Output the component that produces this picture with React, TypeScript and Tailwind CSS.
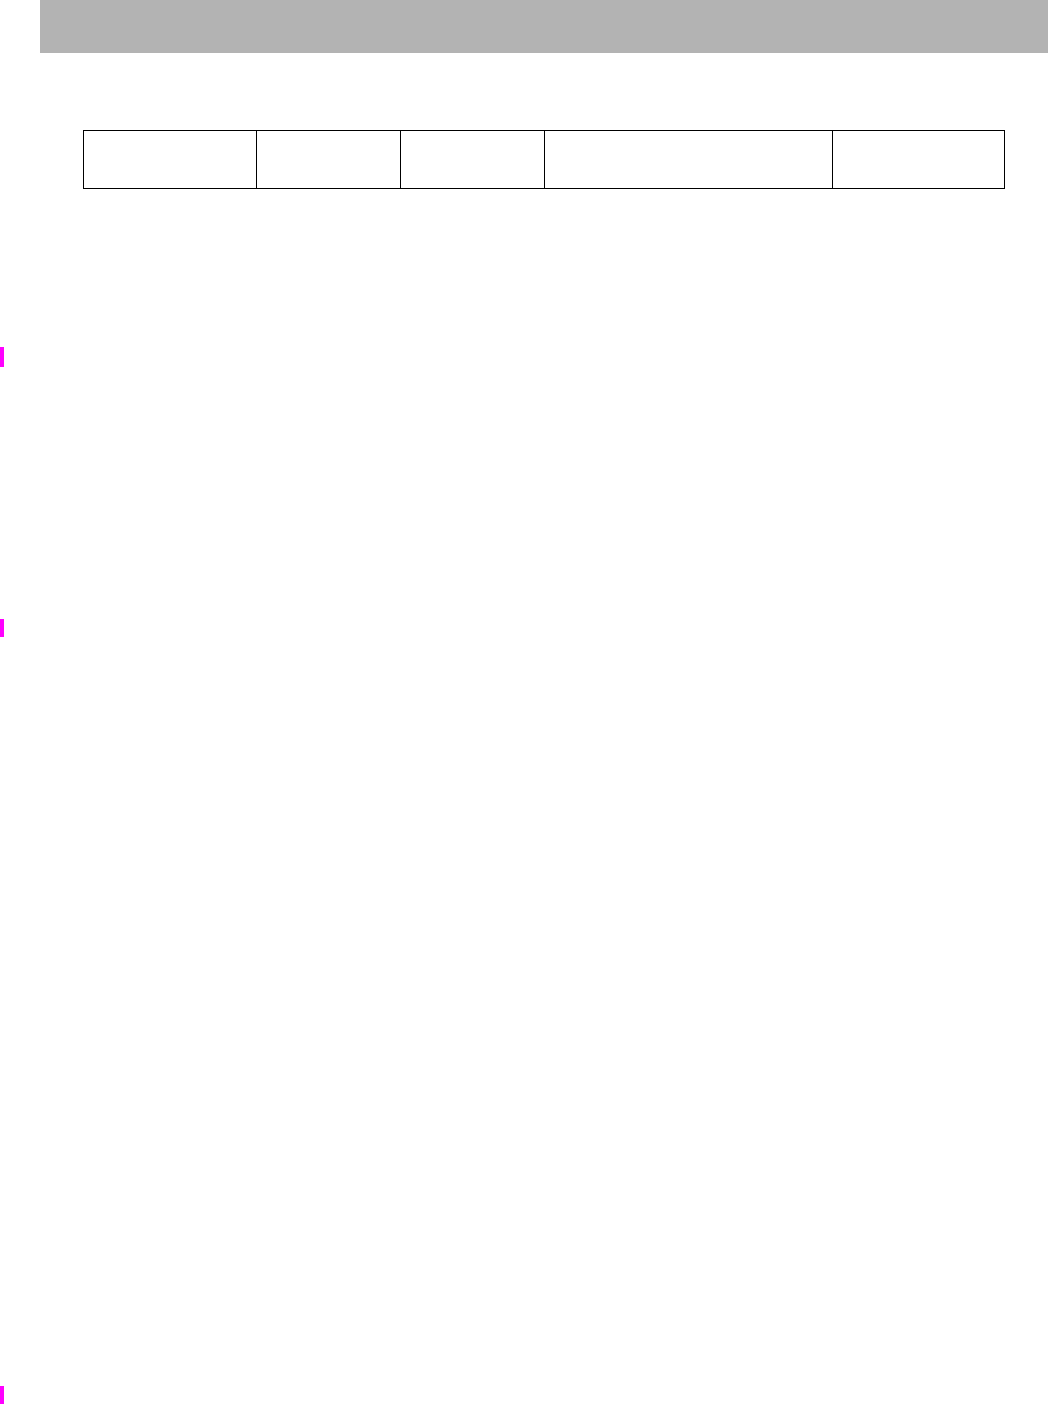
const cells = ["w-[173px]", "w-[144px]", "w-[144px]", "w-[288px]"];

const App = () => {
  return (
    <div className="relative min-h-[1404px] bg-white font-['Liberation_Sans',Arial,sans-serif]">
      <div className="ml-[40px] h-[53px] bg-[#b3b3b3]" />

      <div className="ml-[83px] mt-[77px] flex h-[59px] w-[922px] border border-black">
        {cells.map((w, i) => (
          <div key={i} className={`${w} h-full border-r border-black`} />
        ))}
        <div className="h-full flex-1" />
      </div>

      {/* page markers */}
      <div className="absolute left-0 top-[347px] h-[20px] w-[4px] bg-[#ff00ff]" />
      <div className="absolute left-0 top-[619px] h-[18px] w-[4px] bg-[#ff00ff]" />
      <div className="absolute left-0 top-[1386px] h-[18px] w-[4px] bg-[#ff00ff]" />
    </div>
  );
};

export default App;
